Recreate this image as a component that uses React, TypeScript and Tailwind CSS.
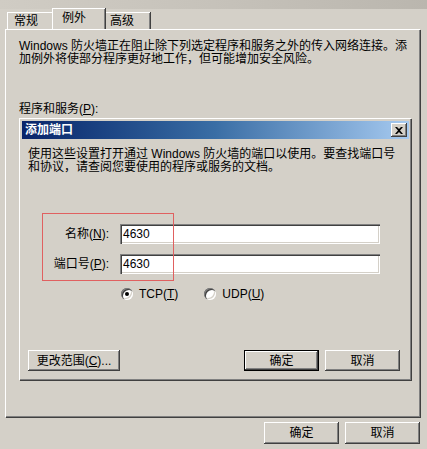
import React from 'react';

// classic Windows 2000 bevels
const raised =
  'bg-[#d4d0c8] shadow-[inset_-1px_-1px_0_#404040,inset_1px_1px_0_#ffffff,inset_-2px_-2px_0_#808080]';
const sunken =
  'bg-white shadow-[inset_1px_1px_0_#808080,inset_2px_2px_0_#404040,inset_-1px_-1px_0_#ffffff,inset_-2px_-2px_0_#d4d0c8]';

interface ButtonProps {
  children: React.ReactNode;
  className?: string;
  isDefault?: boolean;
}

const Button: React.FC<ButtonProps> = ({ children, className = '', isDefault = false }) => (
  <div
    className={`flex items-center justify-center text-[12px] leading-[14px] text-black ${
      isDefault
        ? 'border border-black bg-[#d4d0c8] shadow-[inset_-1px_-1px_0_#404040,inset_1px_1px_0_#ffffff,inset_-2px_-2px_0_#808080]'
        : raised
    } ${className}`}
  >
    {children}
  </div>
);

const Tab: React.FC<{ label: string; active?: boolean; className?: string }> = ({
  label,
  active = false,
  className = '',
}) => (
  <div
    className={`relative flex items-start border-l border-t border-white bg-[#d4d0c8] shadow-[inset_-1px_0_0_#808080,1px_0_0_#404040] ${
      active ? 'z-10 -mx-[2px] h-[21px] pl-[9px] pt-[2px]' : 'mt-[3px] h-[17px] pl-[6px] pt-[1px]'
    } ${className}`}
  >
    <span className="text-[12px] leading-[14px]">{label}</span>
  </div>
);

const Radio: React.FC<{ checked?: boolean }> = ({ checked = false }) => (
  <div className="relative h-[12px] w-[12px] rounded-full bg-white shadow-[inset_1px_1px_0_#808080,inset_2px_2px_0_#404040,inset_-1px_-1px_0_#ffffff,inset_-2px_-2px_0_#d4d0c8]">
    {checked && <div className="absolute left-[4px] top-[4px] h-[4px] w-[4px] rounded-full bg-black" />}
  </div>
);

const App: React.FC = () => {
  return (
    <div className="relative h-[449px] w-[427px] overflow-hidden bg-[#d4d0c8] font-['Liberation_Sans','Noto_Sans_CJK_SC',sans-serif] text-black">
      {/* cut-off title strip */}
      <div className="h-[9px] bg-gradient-to-r from-[#d0ccc4] via-[#c6c2ba] to-[#bab6ae]" />

      {/* tabs */}
      <div className="flex h-[20px] items-start pl-[7px]">
        <Tab label="常规" className="w-[47px]" />
        <Tab label="例外" active className="w-[53px] -mt-[1px]" />
        <Tab label="高级" className="w-[47px]" />
      </div>

      {/* tab panel */}
      <div className="ml-[5px] mr-[7px] h-[388px] border-l border-t border-white px-[13px] pt-[10px] shadow-[inset_-1px_-1px_0_#808080,1px_1px_0_#404040]">
        <p className="whitespace-nowrap text-[12px] leading-[13px]">
          Windows 防火墙正在阻止除下列选定程序和服务之外的传入网络连接。添
          <br />
          加例外将使部分程序更好地工作，但可能增加安全风险。
        </p>
        <p className="mt-[36px] text-[12px] leading-[14px]">
          程序和服务(<span className="underline">P</span>):
        </p>

        {/* 添加端口 dialog */}
        <div className="relative mt-[2px] h-[262px] w-[392px] border-l border-t border-white bg-[#d4d0c8] p-[2px] shadow-[inset_-1px_-1px_0_#808080,1px_1px_0_#404040]">
          <div className="flex h-[18px] items-center justify-between bg-gradient-to-r from-[#0a246a] via-[#3a6ea5] to-[#a6caf0] pl-[3px] pr-[2px]">
            <span className="text-[12px] font-bold leading-[14px] text-white">添加端口</span>
            <div className={`flex h-[14px] w-[16px] items-center justify-center ${raised}`}>
              <svg width="8" height="7" viewBox="0 0 8 7">
                <path d="M0 0h2l2 2 2-2h2L5 3.5 8 7H6L4 5 2 7H0l3-3.5z" fill="#000" />
              </svg>
            </div>
          </div>

          <div className="px-[6px] pt-[9px]">
            <p className="whitespace-nowrap text-[12px] leading-[13px]">
              使用这些设置打开通过 Windows 防火墙的端口以使用。要查找端口号
              <br />
              和协议，请查阅您要使用的程序或服务的文档。
            </p>

            <div className="mt-[50px] flex flex-col gap-[10px]">
              <div className="flex h-[20px] items-center">
                <span className="w-[83px] pr-[2px] text-right text-[12px] leading-[14px]">
                  名称(<span className="underline">N</span>):
                </span>
                <div className={`ml-[9px] flex h-[20px] w-[260px] items-center pl-[3px] text-[12px] ${sunken}`}>
                  4630
                </div>
              </div>
              <div className="flex h-[20px] items-center">
                <span className="w-[83px] pr-[2px] text-right text-[12px] leading-[14px]">
                  端口号(<span className="underline">P</span>):
                </span>
                <div className={`ml-[9px] flex h-[20px] w-[260px] items-center pl-[3px] text-[12px] ${sunken}`}>
                  4630
                </div>
              </div>
            </div>

            <div className="mt-[13px] flex h-[14px] items-center pl-[93px] text-[12px] leading-[14px]">
              <Radio checked />
              <span className="ml-[6px]">
                TCP(<span className="underline">T</span>)
              </span>
              <div className="ml-[26px]">
                <Radio />
              </div>
              <span className="ml-[6px]">
                UDP(<span className="underline">U</span>)
              </span>
            </div>

            <div className="mt-[49px] flex items-center">
              <Button className="h-[21px] w-[92px]">
                更改范围(<span className="underline">C</span>)...
              </Button>
              <Button isDefault className="ml-auto h-[21px] w-[75px]">
                确定
              </Button>
              <Button className="ml-[6px] mr-[3px] h-[21px] w-[75px]">取消</Button>
            </div>
          </div>
        </div>
      </div>

      {/* bottom buttons */}
      <div className="mt-[5px] flex justify-end gap-[6px] pr-[7px]">
        <Button className="h-[22px] w-[75px]">确定</Button>
        <Button className="h-[22px] w-[75px]">取消</Button>
      </div>

      {/* red annotation box */}
      <div className="pointer-events-none absolute left-[42px] top-[213px] h-[68px] w-[132px] border border-[#e06060]" />
    </div>
  );
};

export default App;
